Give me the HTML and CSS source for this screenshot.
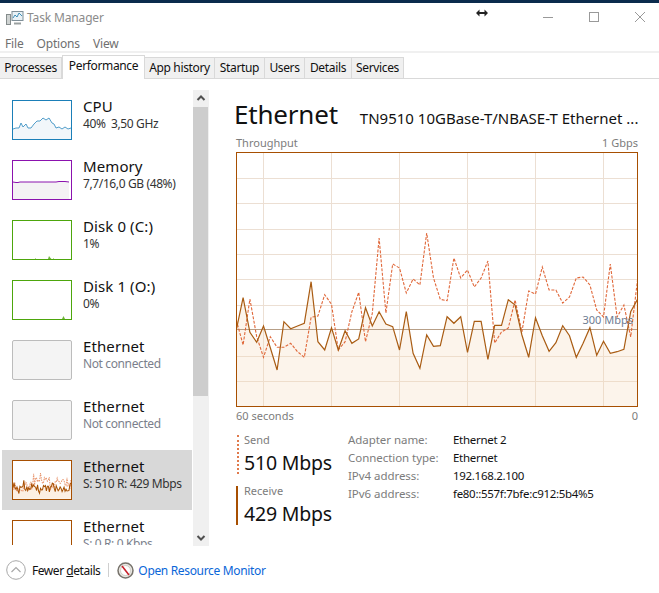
FILE: index.html
```html
<!DOCTYPE html>
<html lang="en">
<head>
<meta charset="utf-8">
<title>Task Manager</title>
<link rel="stylesheet" href="styles.css">
</head>
<body>
<div class="window">
  <div class="accent"></div>
  <header class="titlebar">
    <svg class="app-icon" width="18" height="18" viewBox="0 0 18 18">
      <rect x="6" y="2.500" width="11" height="9" fill="#e8f1f6" stroke="#7f8f98"/>
      <path d="M7 9l2-3 2 2 2-4 3 3" fill="none" stroke="#3d8fb8"/>
      <rect x="0.500" y="5.500" width="4" height="10" fill="#cfd3d2" stroke="#858c8c"/>
      <path d="M8 13.500h7v2H8z" fill="#9aa0a0"/>
    </svg>
    <span class="app-name">Task Manager</span>
    <svg class="cursor" width="12" height="8" viewBox="0 0 12 8"><path d="M0 4l3.500-3.500v2.500h5V0.500L12 4 8.500 7.500V5h-5v2.500z" fill="#222"/></svg>
    <div class="controls">
      <svg width="12" height="12" viewBox="0 0 12 12"><path d="M1 6.500h10" stroke="#999"/></svg>
      <svg width="12" height="12" viewBox="0 0 12 12"><rect x="1.500" y="1.500" width="9" height="9" fill="none" stroke="#999"/></svg>
      <svg width="12" height="12" viewBox="0 0 12 12"><path d="M1 1l10 10M11 1L1 11" stroke="#999"/></svg>
    </div>
  </header>
  <nav class="menu"><span>File</span><span>Options</span><span>View</span></nav>
  <div class="rule"></div>
  <div class="tabs">
    <span class="tab t-processes">Processes</span>
    <span class="tab tab-active t-performance">Performance</span>
    <span class="tab t-app">App history</span>
    <span class="tab t-startup">Startup</span>
    <span class="tab t-users">Users</span>
    <span class="tab t-details">Details</span>
    <span class="tab t-services">Services</span>
  </div>
  <main class="main">
    <aside class="sidebar">
      <div class="list">
        <div class="row">
          <svg class="thumb th-cpu" viewBox="0 0 58 38" preserveAspectRatio="none"><path d="M0 28l3-1 3 0 2-5 2 4 3-3 2 4 3 0 3-4 3-3 3 0 3-3 3 2 3-2 3 5 2 1 2 4 3-1 3 2 3-2 3 2 3-1 0 14H0z" fill="#f1f6fa" stroke="none"/><path d="M0 28l3-1 3 0 2-5 2 4 3-3 2 4 3 0 3-4 3-3 3 0 3-3 3 2 3-2 3 5 2 1 2 4 3-1 3 2 3-2 3 2 3-1" fill="none" stroke="#3f93c4" stroke-width=".9"/></svg>
          <div class="row-text"><div class="row-name">CPU</div><div class="row-sub">40%&nbsp; 3,50 GHz</div></div>
        </div>
        <div class="row">
          <svg class="thumb th-mem" viewBox="0 0 58 38" preserveAspectRatio="none"><path d="M0 21l3 0.500 2 0 2-.5h36l3-.5h6l4 .5v17H0z" fill="#f4f2f4"/><path d="M0 21l3 .5 2 0 2-.5h36l3-.5h6l4 .5" fill="none" stroke="#8b12ae" stroke-width="1"/></svg>
          <div class="row-text"><div class="row-name">Memory</div><div class="row-sub">7,7/16,0 GB (48%)</div></div>
        </div>
        <div class="row">
          <svg class="thumb th-disk" viewBox="0 0 58 38" preserveAspectRatio="none"><path d="M22 38l.5-1 .5 1zM35 38l1-3 1.500 2 1 1zM40 38l.5-1 .5 1z" fill="#6fb53a"/></svg>
          <div class="row-text"><div class="row-name">Disk 0 (C:)</div><div class="row-sub">1%</div></div>
        </div>
        <div class="row">
          <svg class="thumb th-disk" viewBox="0 0 58 38" preserveAspectRatio="none"><path d="M49 38l1.500-3 1.500 3z" fill="#6fb53a"/></svg>
          <div class="row-text"><div class="row-name">Disk 1 (O:)</div><div class="row-sub">0%</div></div>
        </div>
        <div class="row">
          <div class="thumb th-off"></div>
          <div class="row-text"><div class="row-name">Ethernet</div><div class="row-sub sub-muted">Not connected</div></div>
        </div>
        <div class="row">
          <div class="thumb th-off"></div>
          <div class="row-text"><div class="row-name">Ethernet</div><div class="row-sub sub-muted">Not connected</div></div>
        </div>
        <div class="row row-selected">
          <svg class="thumb th-eth" viewBox="236 152 402 255" preserveAspectRatio="none">
            <use href="#area-shape" class="thumb-area"/>
            <use href="#send-line" class="thumb-send"/>
            <use href="#recv-line" class="thumb-recv"/>
          </svg>
          <div class="row-text"><div class="row-name">Ethernet</div><div class="row-sub">S: 510 R: 429 Mbps</div></div>
        </div>
        <div class="row">
          <div class="thumb th-eth"></div>
          <div class="row-text"><div class="row-name">Ethernet</div><div class="row-sub sub-muted">S: 0 R: 0 Kbps</div></div>
        </div>
      </div>
      <div class="scrollbar">
        <svg class="arrow" width="16" height="17" viewBox="0 0 16 17"><path d="M4.500 10L8 6.500 11.500 10" fill="none" stroke="#505050" stroke-width="2"/></svg>
        <div class="track"><div class="scroll-thumb"></div></div>
        <svg class="arrow" width="16" height="16" viewBox="0 0 16 16"><path d="M4.500 6L8 9.500 11.500 6" fill="none" stroke="#505050" stroke-width="2"/></svg>
      </div>
    </aside>
    <section class="detail">
      <div class="heading">
        <h1 class="heading-main">Ethernet</h1>
        <div class="heading-sub">TN9510 10GBase-T/NBASE-T Ethernet ...</div>
      </div>
      <div class="caption caption-top"><span>Throughput</span><span>1 Gbps</span></div>
      <div class="chart">
        <svg class="chart-svg" width="402" height="255" viewBox="236 152 402 255">
          <defs>
            <polygon id="area-shape" points="236.300,406 236.300,330 243.100,297.700 249.900,332.300 256.700,342.300 263.500,326 270.300,347.700 277.100,370 283.900,321.700 290.700,328.700 297.500,326 304.300,323.300 311.100,281.700 317.900,341.700 324.700,350 331.500,327.700 338.300,350 345.100,330.700 351.900,343.300 358.700,339 365.500,307.700 372.300,326 379.100,311.700 385.900,324 392.700,326.700 399.500,350 406.300,311.700 413.100,353.300 419.900,368.300 426.700,335 433.500,346.300 440.300,345.700 447.100,316.700 453.900,323.300 460.700,316.700 467.500,352.300 474.300,321.300 481.100,321.300 487.900,359.300 494.700,325.300 501.500,325.300 508.300,299.700 515.100,305 521.900,335 528.700,357.300 535.500,317.700 542.300,335.700 549.100,351.300 555.900,342.700 562.700,325.700 569.500,335.700 576.300,357.300 583.100,343.300 589.900,327.700 596.700,355.300 603.500,341.300 610.300,353.300 617.100,351.700 623.900,349.300 630.700,311.700 637.500,299.300 637.500,406"/>
            <polyline id="send-line" vector-effect="non-scaling-stroke" points="236.300,320 243.100,345 249.900,299 256.700,336.700 263.500,357.300 270.300,336.700 277.100,347.300 283.900,347.300 290.700,343.300 297.500,351.700 304.300,357.300 311.100,317.300 317.900,316 324.700,294.700 331.500,304.300 338.300,350 345.100,341.700 351.900,311.700 358.700,292.300 365.500,341.700 372.300,313.300 379.100,238 385.900,313 392.700,264 399.500,268 406.300,293 413.100,279 419.900,285 426.700,233 433.500,278 440.300,299.300 447.100,300.700 453.900,258 460.700,278 467.500,270 474.300,287 481.100,278 487.900,261 494.700,343 501.500,332 508.300,328 515.100,300 521.900,332 528.700,291 535.500,294 542.300,267 549.100,290 555.900,290 562.700,303 569.500,297 576.300,278 583.100,277 589.900,285 596.700,310 603.500,317 610.300,264 617.100,317 623.900,305 630.700,337 637.500,280"/>
            <polyline id="recv-line" vector-effect="non-scaling-stroke" points="236.300,330 243.100,297.700 249.900,332.300 256.700,342.300 263.500,326 270.300,347.700 277.100,370 283.900,321.700 290.700,328.700 297.500,326 304.300,323.300 311.100,281.700 317.900,341.700 324.700,350 331.500,327.700 338.300,350 345.100,330.700 351.900,343.300 358.700,339 365.500,307.700 372.300,326 379.100,311.700 385.900,324 392.700,326.700 399.500,350 406.300,311.700 413.100,353.300 419.900,368.300 426.700,335 433.500,346.300 440.300,345.700 447.100,316.700 453.900,323.300 460.700,316.700 467.500,352.300 474.300,321.300 481.100,321.300 487.900,359.300 494.700,325.300 501.500,325.300 508.300,299.700 515.100,305 521.900,335 528.700,357.300 535.500,317.700 542.300,335.700 549.100,351.300 555.900,342.700 562.700,325.700 569.500,335.700 576.300,357.300 583.100,343.300 589.900,327.700 596.700,355.300 603.500,341.300 610.300,353.300 617.100,351.700 623.900,349.300 630.700,311.700 637.500,299.300"/>
          </defs>
          <rect x="236" y="152" width="402" height="255" fill="#fff"/>
          <path class="grid" d="M237 178.500h400M237 203.500h400M237 229.500h400M237 254.500h400M237 279.500h400M237 305.500h400M237 356.500h400M237 381.500h400M263.500 153v253M331.500 153v253M399.500 153v253M467.500 153v253M535.500 153v253M603.500 153v253"/>
          <use href="#area-shape" class="area"/>
          <path class="midline" d="M237 329.500h400"/>
          <use href="#send-line" class="send"/>
          <use href="#recv-line" class="recv"/>
          <rect class="frame" x="236.500" y="152.500" width="401" height="254"/>
        </svg>
        <span class="scale-label">300 Mbps</span>
      </div>
      <div class="caption caption-bottom"><span>60 seconds</span><span>0</span></div>
      <div class="stats">
        <div class="rates">
          <div class="rate rate-send"><div class="rate-label">Send</div><div class="rate-value">510 Mbps</div></div>
          <div class="rate rate-recv"><div class="rate-label">Receive</div><div class="rate-value">429 Mbps</div></div>
        </div>
        <dl class="info">
          <dt>Adapter name:</dt><dd>Ethernet 2</dd>
          <dt>Connection type:</dt><dd>Ethernet</dd>
          <dt>IPv4 address:</dt><dd>192.168.2.100</dd>
          <dt>IPv6 address:</dt><dd>fe80::557f:7bfe:c912:5b4%5</dd>
        </dl>
      </div>
    </section>
  </main>
  <footer class="footer">
    <svg class="fewer-icon" width="20" height="20" viewBox="0 0 20 20"><circle cx="10" cy="10" r="9.300" fill="#fff" stroke="#a8a8a8"/><path d="M5.500 12L10 7.500 14.500 12" fill="none" stroke="#a8a8a8" stroke-width="1.200"/></svg>
    <span class="fewer">Fewer <u>d</u>etails</span>
    <span class="divider"></span>
    <svg class="res-icon" width="17" height="17" viewBox="0 0 17 17"><circle cx="8.500" cy="8.500" r="7.500" fill="#e9e7e2" stroke="#77736c" stroke-width="1.500"/><circle cx="8.500" cy="8.500" r="5" fill="#fff" stroke="#c4c0b8" stroke-width=".7"/><path d="M5 4l7 9" stroke="#c8202a" stroke-width="1.600"/></svg>
    <span class="link">Open Resource Monitor</span>
  </footer>
</div>
</body>
</html>
```
FILE: styles.css
```css
* { box-sizing: border-box; }
html, body { margin: 0; padding: 0; background: #fff; }
body { font-family: "Noto Sans", "Open Sans", sans-serif; font-size: 12px; color: #111; overflow: hidden; }
.window { width: 659px; height: 593px; display: flex; flex-direction: column; overflow: hidden; }
.accent { height: 3px; flex: none; background: #0b2b4d; }

.titlebar { height: 30px; flex: none; display: flex; align-items: center; position: relative; padding-left: 6px; }
.app-icon { margin-right: 3px; margin-top: -1px; }
.app-name { color: #8b8b8b; font-size: 12px; line-height: 16px; margin-top: -1px; letter-spacing: -.15px; }
.cursor { position: absolute; left: 476px; top: 6px; }
.controls { position: absolute; top: 8px; left: 542px; display: flex; gap: 34px; }

.menu { height: 18px; flex: none; display: flex; gap: 13px; padding: 3px 0 0 5px; color: #6f6f6f; font-size: 12px; line-height: 15px; letter-spacing: -.17px; align-items: center; }
.rule { height: 2px; flex: none; background: #f0f0f0; margin-bottom: 2px; }

.tabs { height: 24px; flex: none; display: flex; border-bottom: 1px solid #d9d9d9; align-items: flex-end; font-size: 12px; letter-spacing: -.35px; }
.tab { height: 21px; line-height: 19px; background: #f0f0f0; border: 1px solid #d9d9d9; border-bottom: none; border-left: none; text-align: center; flex: none; }
.tab-active { height: 24px; line-height: 20px; background: #fff; border: 1px solid #d9d9d9; border-bottom: none; margin-bottom: -1px; position: relative; color: #111; padding-bottom: 3px; }
.t-processes { width: 62px; }
.t-performance { width: 83px; }
.t-app { width: 70px; }
.t-startup { width: 50px; }
.t-users { width: 40px; }
.t-details { width: 47px; }
.t-services { width: 52px; }

.main { flex: 1; min-height: 0; display: flex; padding-top: 11px; }
.sidebar { width: 209px; flex: none; height: 456px; display: flex; padding-left: 2px; }
.list { width: 190px; height: 455px; overflow: hidden; flex: none; margin-right: 1px; }
.row { height: 60px; display: flex; align-items: center; padding-left: 10px; gap: 11px; }
.row-selected { background: #d8d8d8; }
.thumb { width: 60px; height: 40px; flex: none; display: block; }
.th-cpu { border: 1px solid #1b7fb8; background: #fff; }
.th-mem { border: 1px solid #8b12ae; background: #fff; }
.th-disk { border: 1px solid #4da60c; background: #fff; }
.th-off { border: 1px solid #bcbcbc; background: #f4f4f4; border-radius: 2px; }
.th-eth { border: 1px solid #a74f01; background: #fff; }
.thumb-area { fill: #fcefe3; }
.thumb-send { fill: none; stroke: #e8946c; stroke-width: 1; stroke-dasharray: 1.500 1; }
.thumb-recv { fill: none; stroke: #a74f01; stroke-width: 1; }
.row-text { display: flex; flex-direction: column; padding-bottom: 11px; }
.row-name { font-size: 15px; line-height: 19px; color: #111; letter-spacing: .1px; }
.row-sub { font-size: 12px; line-height: 16px; color: #333; letter-spacing: -.38px; white-space: nowrap; }
.sub-muted { color: #7b7f8c; }

.scrollbar { width: 16px; flex: none; background: #f0f0f0; display: flex; flex-direction: column; }
.arrow { flex: none; display: block; }
.track { flex: 1; }
.scroll-thumb { width: 15px; height: 289px; background: #cdcdcd; }

.detail { flex: 1; min-width: 0; padding: 0 21px 0 27px; display: flex; flex-direction: column; }
.heading { height: 36px; display: flex; align-items: center; gap: 22px; padding-top: 12px; }
.heading-main { font-size: 26px; line-height: 34px; font-weight: 400; margin: 0 0 0 -2px; color: #111; letter-spacing: -.2px; }
.heading-sub { font-size: 15px; line-height: 20px; color: #111; white-space: nowrap; margin-top: 8px; letter-spacing: 0; }
.caption { display: flex; justify-content: space-between; color: #7c7c7c; font-size: 11px; line-height: 14px; }
.caption-top { margin-top: 10px; height: 16px; }
.caption-bottom { margin-top: 2px; }
.chart { position: relative; width: 402px; height: 255px; flex: none; }
.chart-svg { display: block; }
.grid { stroke: #ecdfd3; fill: none; stroke-width: 1; }
.area { fill: #f4d6b8; fill-opacity: .28; }
.midline { stroke: #b79f87; fill: none; stroke-width: 1; }
.send { fill: none; stroke: #e0683a; stroke-width: 1.100; stroke-dasharray: 3 1.500; }
.recv { fill: none; stroke: #a95c13; stroke-width: 1.200; }
.frame { fill: none; stroke: #a74f01; stroke-width: 1; }
.scale-label { position: absolute; right: 5px; top: 161px; color: #6e7c92; font-size: 11px; line-height: 14px; }

.stats { display: flex; margin-top: 12px; }
.rates { width: 112px; flex: none; display: flex; flex-direction: column; gap: 12px; padding-left: 1px; }
.rate { height: 39px; }
.rate-send { border-left: 2px dotted #e07a4c; padding-left: 5px; }
.rate-recv { border-left: 2px solid #a74f01; margin-left: -1px; padding-left: 6px; }
.rate-label { font-size: 11px; line-height: 14px; color: #7c7c7c; margin-top: -2px; margin-bottom: 3px; }
.rate-value { font-size: 19.500px; line-height: 25px; color: #111; white-space: nowrap; letter-spacing: -.2px; }
.info { margin: -4px 0 0; display: grid; grid-template-columns: 105px auto; grid-auto-rows: 18px; font-size: 11.500px; line-height: 18px; align-content: start; }
.info dt { color: #7c7c7c; margin: 0; letter-spacing: -.05px; }
.info dd { color: #111; margin: 0; letter-spacing: -.3px; }

.footer { height: 44px; flex: none; display: flex; align-items: center; padding: 0 0 2px 6px; }
.fewer-icon { margin-right: 6px; }
.fewer { color: #111; font-size: 12px; letter-spacing: -.45px; }
.divider { width: 1px; height: 14px; background: #cfcfcf; margin: 0 8px 0 8px; }
.res-icon { margin-right: 4px; }
.link { color: #0a66d8; font-size: 12px; letter-spacing: -.34px; }
```
